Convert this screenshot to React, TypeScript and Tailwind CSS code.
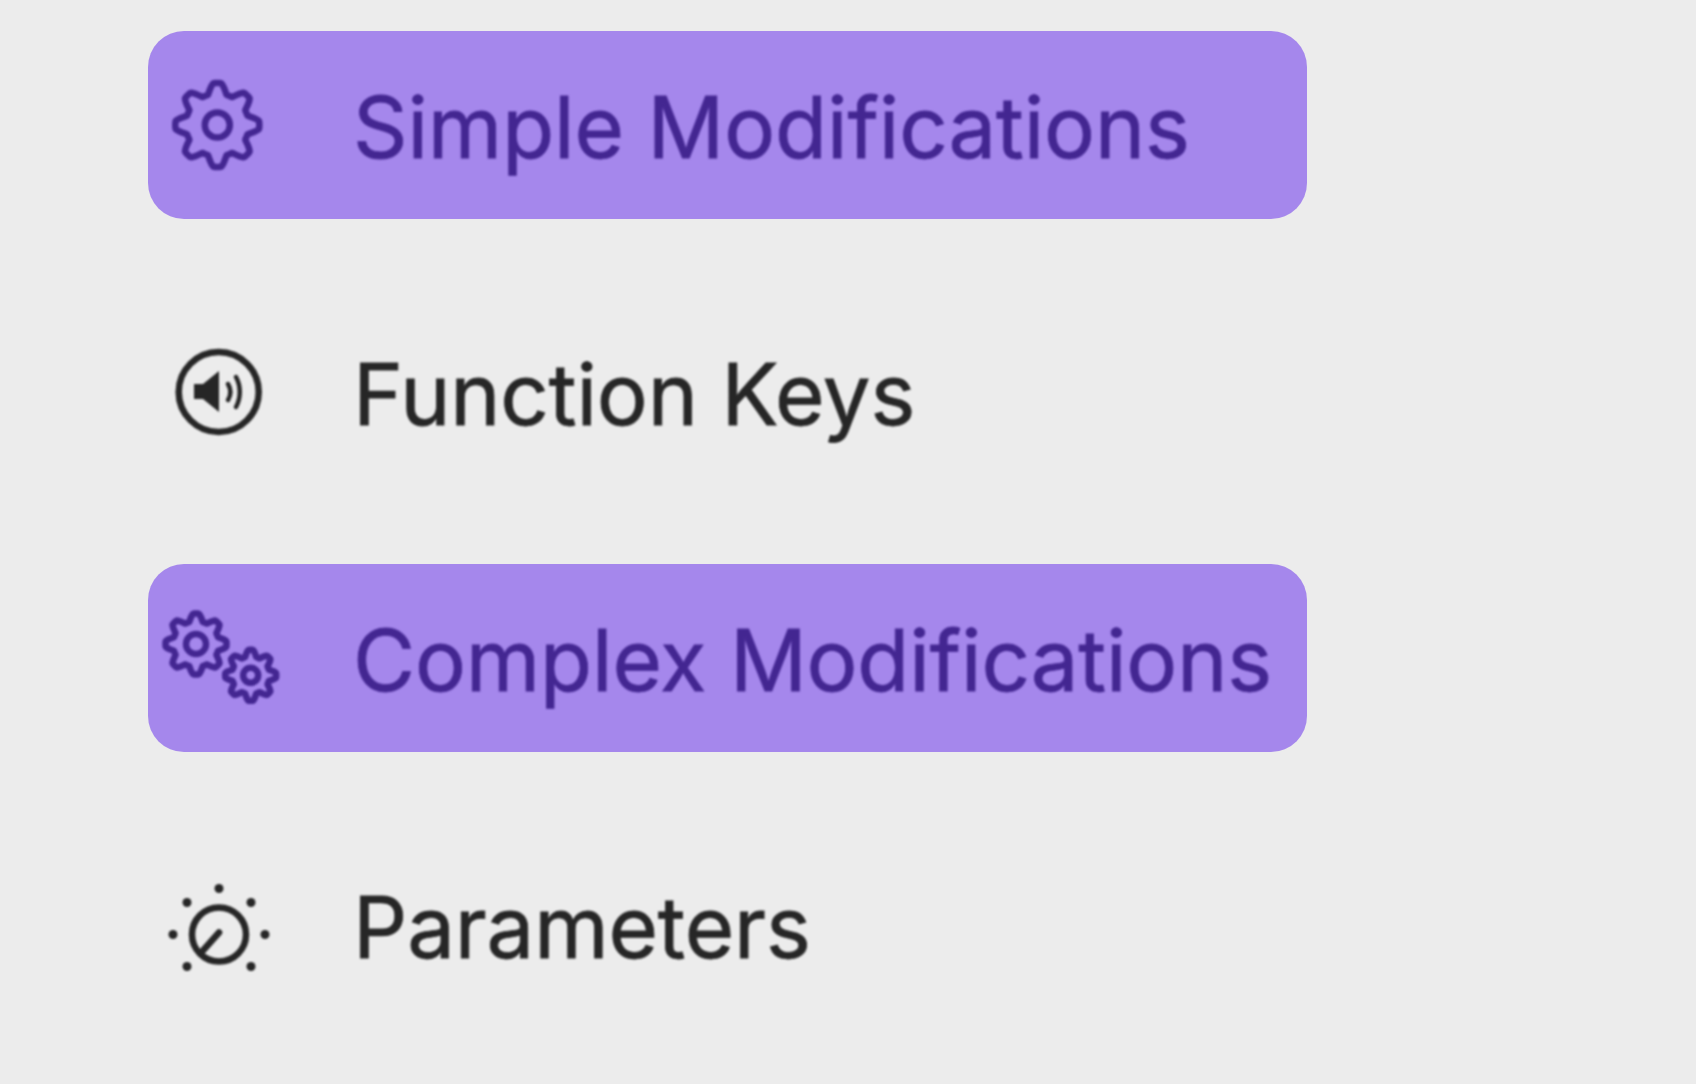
const FONT = 'font-["Inter","Liberation_Sans",sans-serif]';

// rounded cog outline, r swings between inner and outer with flattened teeth
function gearPath(cx: number, cy: number, inner: number, outer: number, teeth = 8) {
  const steps = teeth * 24;
  const pts: string[] = [];
  for (let i = 0; i < steps; i++) {
    const a = (i / steps) * Math.PI * 2 - Math.PI / 2;
    const wave = Math.max(-1, Math.min(1, Math.cos(a * teeth + (Math.PI * teeth) / 2) * 1.35));
    const r = inner + ((wave + 1) / 2) * (outer - inner);
    pts.push(`${(cx + r * Math.cos(a)).toFixed(2)} ${(cy + r * Math.sin(a)).toFixed(2)}`);
  }
  return `M${pts.join('L')}Z`;
}

function GearIcon() {
  return (
    <svg viewBox="0 0 120 120" className="w-[120px] h-[120px] overflow-visible" fill="none" stroke="currentColor" strokeWidth="6.5">
      <path d={gearPath(60.3, 60, 31.5, 42)} strokeLinejoin="round" />
      <circle cx="60.3" cy="60" r="12.5" />
    </svg>
  );
}

function VolumeIcon() {
  return (
    <svg viewBox="0 0 120 120" className="w-[120px] h-[120px] overflow-visible" fill="none" stroke="currentColor">
      <circle cx="61.7" cy="60" r="40" strokeWidth="6.5" />
      <path d="M37 52h9l16-13v41l-16-13h-9z" fill="currentColor" stroke="none" />
      <path d="M71 52c3 5 3 11 0 16" strokeWidth="4.5" strokeLinecap="round" />
      <path d="M79 45c5 9 5 21 0 30" strokeWidth="4.5" strokeLinecap="round" />
    </svg>
  );
}

function GearsIcon() {
  return (
    <svg viewBox="0 0 120 120" className="w-[120px] h-[120px] overflow-visible" fill="none" stroke="currentColor" strokeWidth="6.5">
      <path d={gearPath(39, 46, 23, 30.5)} strokeLinejoin="round" />
      <circle cx="39" cy="46" r="10" />
      <path d={gearPath(93.7, 77.3, 19, 25.5)} strokeLinejoin="round" />
      <circle cx="93.7" cy="77.3" r="7.5" />
    </svg>
  );
}

function KnobIcon() {
  // no dot at the bottom of the dial
  const dots = [
    [62, 23.5],
    [30, 37.5],
    [94, 37.5],
    [16, 69.5],
    [108, 69.5],
    [30, 101.5],
    [94, 101.5],
  ];
  return (
    <svg viewBox="0 0 120 120" className="w-[120px] h-[120px] overflow-visible" fill="none" stroke="currentColor">
      <circle cx="62" cy="69.5" r="27" strokeWidth="6.5" />
      <path d="M62 67.5L46 85.5" strokeWidth="6.5" strokeLinecap="round" />
      {dots.map(([x, y]) => (
        <circle key={`${x}-${y}`} cx={x} cy={y} r="4.5" fill="currentColor" stroke="none" />
      ))}
    </svg>
  );
}

const items = [
  { label: 'Simple Modifications', icon: GearIcon, active: true },
  { label: 'Function Keys', icon: VolumeIcon, active: false },
  { label: 'Complex Modifications', icon: GearsIcon, active: true },
  { label: 'Parameters', icon: KnobIcon, active: false },
];

export default function App() {
  return (
    <div className={`h-screen overflow-hidden bg-[#ececec] pl-[148px] pt-[31px] ${FONT}`}>
      <div className="flex flex-col gap-[78.5px] w-[1159px]">
        {items.map(({ label, icon: Icon, active }) => (
          <div
            key={label}
            className={`flex items-center h-[188px] rounded-[36px] pl-[9px] ${active ? 'bg-[#a587ec] text-[#432691]' : 'text-[#262626]'}`}
          >
            <div className="blur-[0.8px]">
              <Icon />
            </div>
            <span className="ml-[76px] pt-[5px] text-[85px] font-normal tracking-[-0.15px] leading-none whitespace-nowrap blur-[0.8px] [-webkit-text-stroke:0.8px_currentColor]">{label}</span>
          </div>
        ))}
      </div>
    </div>
  );
}
